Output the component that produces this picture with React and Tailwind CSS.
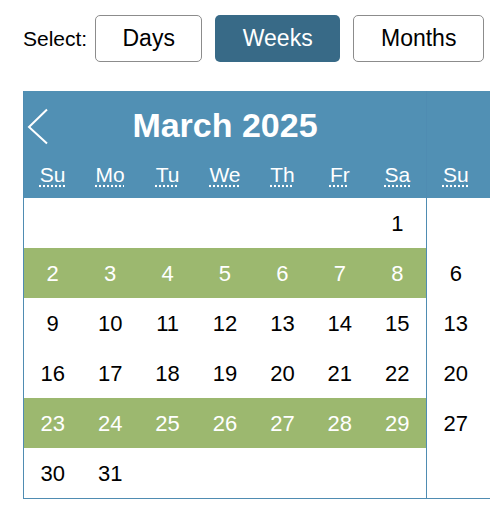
import React from 'react';

const march = [
  [null, null, null, null, null, null, 1],
  [2, 3, 4, 5, 6, 7, 8],
  [9, 10, 11, 12, 13, 14, 15],
  [16, 17, 18, 19, 20, 21, 22],
  [23, 24, 25, 26, 27, 28, 29],
  [30, 31, null, null, null, null, null],
];

const april = [
  [null, null, 1, 2, 3, 4, 5],
  [6, 7, 8, 9, 10, 11, 12],
  [13, 14, 15, 16, 17, 18, 19],
  [20, 21, 22, 23, 24, 25, 26],
  [27, 28, 29, 30, null, null, null],
];

const dayNames = [
  ['Su', 'Sunday'],
  ['Mo', 'Monday'],
  ['Tu', 'Tuesday'],
  ['We', 'Wednesday'],
  ['Th', 'Thursday'],
  ['Fr', 'Friday'],
  ['Sa', 'Saturday'],
];

// weeks in March that are picked
const selectedWeeks = [1, 4];

function Month({ title, weeks, selected = [], showPrev, last }) {
  return (
    <div className={'w-[403px] shrink-0 ' + (last ? '' : 'border-r border-[#4f8cb2]')}>
      {/* Header */}
      <div className="relative h-[107px] bg-[#5190b4] text-white pt-[14px]">
        {showPrev && (
          <svg className="absolute left-[3px] top-[17px]" width="22" height="37" viewBox="0 0 22 37" fill="none">
            <polyline points="20,1.5 2,19 20,35.5" stroke="white" strokeWidth="2" />
          </svg>
        )}
        <div className="h-[40px] leading-[40px] text-center text-[34px] font-bold">{title}</div>
        <div className="grid grid-cols-7 mt-[16px] h-[28px] leading-[28px] text-[21px]">
          {dayNames.map(([d, full]) => (
            <div key={d} className="text-center">
              <abbr title={full} className="underline decoration-dotted underline-offset-[3px]">{d}</abbr>
            </div>
          ))}
        </div>
      </div>

      {/* Days */}
      <div>
        {weeks.map((week, i) => {
          const on = selected.includes(i);
          return (
            <div
              key={i}
              className={'grid grid-cols-7 h-[50px] items-center text-[22px] ' + (on ? 'bg-[#9cb86f] text-white' : 'text-black')}
            >
              {week.map((d, j) => (
                <div key={j} className="text-center">{d ?? ''}</div>
              ))}
            </div>
          );
        })}
      </div>
    </div>
  );
}

export default function App() {
  return (
    <div className="w-[490px] h-[506px] overflow-hidden bg-white font-['Liberation_Sans',Arial,sans-serif]">
      {/* View selector */}
      <div className="flex items-center pl-[23px] pt-[15px]">
        <span className="text-[21px] text-black mr-[8px]">Select:</span>
        <button className="w-[107px] h-[47px] border border-[#8c8c8c] rounded-[5px] bg-white text-[23px] text-black">
          Days
        </button>
        <button className="ml-[13px] w-[125px] h-[47px] rounded-[5px] bg-[#386a87] text-[23px] text-white">
          Weeks
        </button>
        <button className="ml-[13px] w-[131px] h-[47px] border border-[#8c8c8c] rounded-[5px] bg-white text-[23px] text-black">
          Months
        </button>
      </div>

      {/* Calendar */}
      <div className="ml-[23px] mt-[29px] flex w-max border-l border-b border-[#4f8cb2]">
        <Month title="March 2025" weeks={march} selected={selectedWeeks} showPrev />
        <Month title="April 2025" weeks={april} last />
      </div>
    </div>
  );
}
